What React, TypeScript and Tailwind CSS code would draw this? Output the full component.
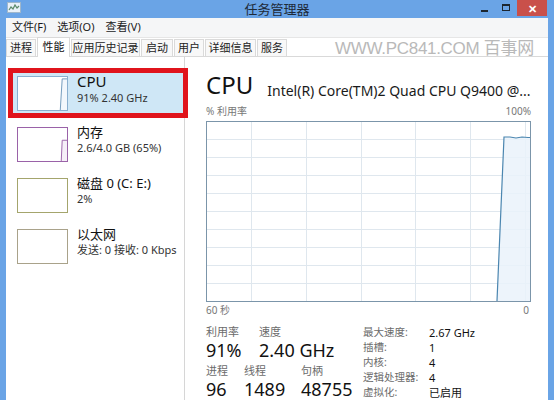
import React from 'react'

const font = "font-['Segoe_UI','Noto_Sans','Noto_Sans_CJK_SC',sans-serif]"

const tabs = [
  { label: '进程', w: 'w-[30px]' },
  { label: '性能', w: 'w-[33px]', active: true },
  { label: '应用历史记录', w: 'w-[69px]' },
  { label: '启动', w: 'w-[32px]' },
  { label: '用户', w: 'w-[30px]' },
  { label: '详细信息', w: 'w-[51px]' },
  { label: '服务', w: 'w-[30px]' },
]

type Item = {
  title: string
  sub: string
  box: string
  selected?: boolean
  line?: string
  fill?: string
  stroke?: string
}

const items: Item[] = [
  {
    title: 'CPU',
    sub: '91% 2.40 GHz',
    box: 'border-[#8aafcf]',
    selected: true,
    line: '44,35 46,2 51,2',
    fill: '#f2f7fc',
    stroke: '#6f98bb',
  },
  {
    title: '内存',
    sub: '2.6/4.0 GB (65%)',
    box: 'border-[#9a62a8]',
    line: '45,35 46,13 51,13',
    fill: '#f6eff8',
    stroke: '#9a62a8',
  },
  { title: '磁盘 0 (C: E:)', sub: '2%', box: 'border-[#a4a56c]' },
  { title: '以太网', sub: '发送: 0 接收: 0 Kbps', box: 'border-[#a9a28a]' },
]

const specs = [
  ['最大速度:', '2.67 GHz'],
  ['插槽:', '1'],
  ['内核:', '4'],
  ['逻辑处理器:', '4'],
  ['虚拟化:', '已启用'],
]

const Thumb = ({ item }: { item: Item }) => (
  <div className={`w-[51px] h-[35px] border bg-white shrink-0 ${item.box}`}>
    {item.line && (
      <svg width="49" height="33" viewBox="0 0 51 35" preserveAspectRatio="none" className="block">
        <polygon points={`${item.line} 51,35`} fill={item.fill} />
        <polyline points={item.line} fill="none" stroke={item.stroke} strokeWidth="1" />
      </svg>
    )}
  </div>
)

const CpuGraph = () => {
  const vx = [45, 100, 155, 209, 264, 319]
  const hy = [18, 36, 54, 72, 90, 108, 126, 144, 162]
  const line = '291,180 298,16 304,16 310,17 316,16 322,16.5 324,16.5'
  return (
    <svg width="325" height="181" viewBox="0 0 325 181" className="block">
      {vx.map((x) => (
        <line key={'v' + x} x1={x + 0.5} y1="0" x2={x + 0.5} y2="181" stroke="#dfe7ee" />
      ))}
      {hy.map((y) => (
        <line key={'h' + y} x1="0" y1={y + 0.5} x2="325" y2={y + 0.5} stroke="#dfe7ee" />
      ))}
      <polygon points={`${line} 324,180`} fill="#eaf2fa" fillOpacity="0.85" />
      <polyline points={line} fill="none" stroke="#4b86b0" strokeWidth="1.2" />
      <rect x="0.5" y="0.5" width="324" height="180" fill="none" stroke="#7b95aa" />
    </svg>
  )
}

const Stat = ({ label, value, w }: { label: string; value: string; w?: string }) => (
  <div className={`flex flex-col ${w ?? ''}`}>
    <span className="text-[11px] leading-[14px] text-[#6b6b6b]">{label}</span>
    <span className="text-[18px] leading-[22px] text-[#111]">{value}</span>
  </div>
)

export default function App() {
  return (
    <div className={`w-[554px] h-[400px] overflow-hidden bg-[#6aa4e6] flex flex-col ${font}`}>
      {/* Title bar */}
      <div className="relative h-[18px] shrink-0 flex items-start">
        <svg width="14" height="12" viewBox="0 0 14 12" className="ml-[7px] mt-[2px]">
          <rect x="0.5" y="0.5" width="13" height="10" fill="#e9f1f8" stroke="#9fb7cc" />
          <polyline points="2,8 4,5 6,7 8,3 10,6 12,4" fill="none" stroke="#5b8a6a" strokeWidth="1.2" />
        </svg>
        <div className="absolute inset-x-0 top-0 text-center text-[13px] leading-[18px] text-[#1e2a38]">
          任务管理器
        </div>
        <div className="ml-auto flex items-start h-full mr-[7px]">
          <div className="w-[22px] h-[16px] flex items-end justify-center pb-[4px]">
            <div className="w-[7px] h-[2px] bg-[#1c2630]" />
          </div>
          <div className="w-[22px] h-[16px] flex items-start justify-center pt-[4px]">
            <div className="w-[8px] h-[7px] border border-[#1c2630] border-t-2" />
          </div>
          <div className="w-[30px] h-[16px] bg-[#c9504a] flex items-center justify-center text-white text-[11px] font-bold leading-none">
            ✕
          </div>
        </div>
      </div>

      {/* Window body */}
      <div className="flex-1 mx-[6px] bg-white flex flex-col relative">
        {/* Watermark */}
        <div className="absolute left-[329px] top-[21px] text-[17px] leading-[20px] text-[#b9b9b9] font-['Liberation_Sans','Noto_Sans_CJK_SC',sans-serif] tracking-[-0.3px] pointer-events-none">
          WWW.PC841.COM 百事网
        </div>

        {/* Menu */}
        <div className="h-[20px] shrink-0 bg-[#f5f6f7] flex items-center gap-[11px] pl-[6px] text-[11px] text-[#1a1a1a] border-b border-[#e6e6e6]">
          <span>文件(F)</span>
          <span>选项(O)</span>
          <span>查看(V)</span>
        </div>

        {/* Tabs */}
        <div className="h-[19px] shrink-0 flex items-end gap-[1px] border-b border-[#d9d9d9] bg-white">
          {tabs.map((t) =>
            t.active ? (
              <div
                key={t.label}
                className={`${t.w} h-[20px] -mb-px bg-white border border-b-0 border-[#d9d9d9] flex items-center justify-center text-[11px] text-[#111]`}
              >
                {t.label}
              </div>
            ) : (
              <div
                key={t.label}
                className={`${t.w} h-[17px] bg-[#f8f8f8] border border-b-0 border-[#dadada] flex items-center justify-center text-[11px] text-[#222]`}
              >
                {t.label}
              </div>
            ),
          )}
        </div>

        {/* Content */}
        <div className="flex-1 flex min-h-0">
          {/* Left list */}
          <div className="w-[179px] shrink-0 border-r border-[#d6d6d6] pt-[11px] flex flex-col gap-[1px]">
            {items.map((it) => (
              <div
                key={it.title}
                className={`ml-[2px] w-[180px] h-[50px] border-[5px] flex items-start pl-[4px] pt-[3px] ${
                  it.selected ? 'border-[#e0141c] bg-[#cfe7f6]' : 'border-transparent'
                }`}
              >
                <Thumb item={it} />
                <div className={`ml-[9px] flex flex-col ${it.selected ? '-mt-[5px]' : '-mt-[3px]'}`}>
                  <span
                    className={`text-[#111] ${
                      it.selected ? 'text-[15px] leading-[20px]' : 'text-[13px] leading-[17px]'
                    }`}
                  >
                    {it.title}
                  </span>
                  <span className="text-[11px] leading-[14px] text-[#333]">{it.sub}</span>
                </div>
              </div>
            ))}
          </div>

          {/* Right detail */}
          <div className="flex-1 pl-[21px] pr-[17px] pt-[14px] flex flex-col">
            <div className="h-[28px] flex items-start">
              <span className="text-[24px] leading-[28px] text-[#111]">CPU</span>
              <span className="ml-[14px] pt-[11px] text-[14px] leading-[17px] text-[#1a1a1a] whitespace-nowrap">
                Intel(R) Core(TM)2 Quad CPU Q9400 @...
              </span>
            </div>
            <div className="mt-[6px] flex justify-between text-[10px] leading-[12px] text-[#777]">
              <span>% 利用率</span>
              <span>100%</span>
            </div>
            <div className="mt-[4px]">
              <CpuGraph />
            </div>
            <div className="mt-[2px] flex justify-between text-[10px] leading-[12px] text-[#777]">
              <span>60 秒</span>
              <span className="pr-[2px]">0</span>
            </div>

            <div className="mt-[9px] flex">
              <div className="w-[157px] shrink-0 flex flex-col">
                <div className="flex">
                  <Stat label="利用率" value="91%" w="w-[53px]" />
                  <Stat label="速度" value="2.40 GHz" />
                </div>
                <div className="mt-[3px] flex">
                  <Stat label="进程" value="96" w="w-[38px]" />
                  <Stat label="线程" value="1489" w="w-[57px]" />
                  <Stat label="句柄" value="48755" />
                </div>
              </div>
              <div className="grid grid-cols-[66px_1fr] leading-[15px]">
                {specs.map(([k, v]) => (
                  <React.Fragment key={k}>
                    <span className="text-[10.5px] text-[#6b6b6b]">{k}</span>
                    <span className="text-[11px] text-[#111]">{v}</span>
                  </React.Fragment>
                ))}
              </div>
            </div>
          </div>
        </div>
      </div>
    </div>
  )
}
